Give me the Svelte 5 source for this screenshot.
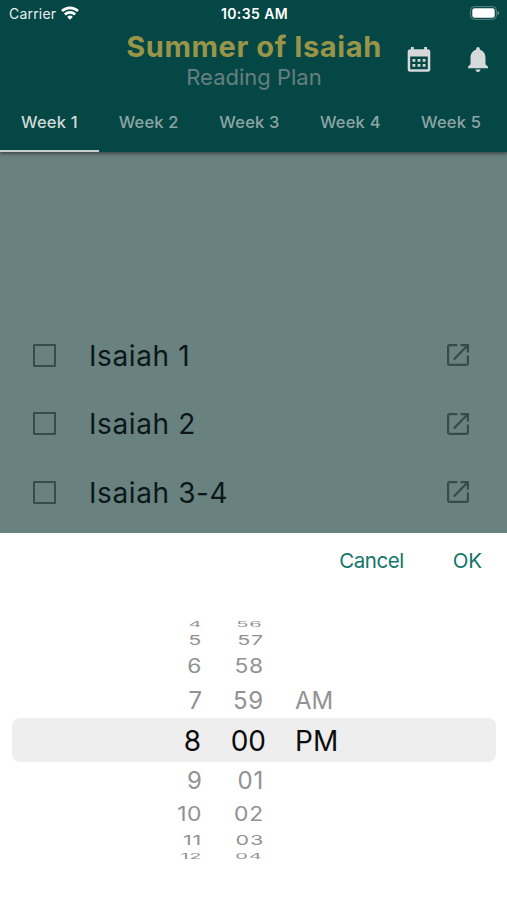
<script lang="ts">
	const weeks = [1, 2, 3, 4, 5];
	const readings = ['Isaiah 1', 'Isaiah 2', 'Isaiah 3-4'];

	let activeWeek = $state(1);

	// rows shrink towards the rim of the wheel
	const rows = [
		{ hour: '4', minute: '56', period: '', size: 'rim' },
		{ hour: '5', minute: '57', period: '', size: 'far' },
		{ hour: '6', minute: '58', period: '', size: 'mid' },
		{ hour: '7', minute: '59', period: 'AM', size: 'near' },
		{ hour: '8', minute: '00', period: 'PM', size: 'selected' },
		{ hour: '9', minute: '01', period: '', size: 'near' },
		{ hour: '10', minute: '02', period: '', size: 'mid' },
		{ hour: '11', minute: '03', period: '', size: 'far' },
		{ hour: '12', minute: '04', period: '', size: 'rim' }
	];
</script>

<div class="screen">
	<header>
		<div class="status">
			<div class="carrier">
				<span>Carrier</span>
				<svg width="18" height="14" viewBox="0 0 18 14" fill="none" stroke="#fff" stroke-width="2.7">
					<path d="M1 5.1a11.6 11.6 0 0 1 16 0M3.9 8.4a7.4 7.4 0 0 1 10.2 0" />
					<path d="M9 13.8 6.2 10.9a4.1 4.1 0 0 1 5.6 0z" fill="#fff" stroke="none" />
				</svg>
			</div>
			<span class="time">10:35 AM</span>
			<svg class="battery" width="30" height="14" viewBox="0 0 30 14">
				<rect x=".6" y=".6" width="25.8" height="12.8" rx="3.8" fill="none" stroke="#5b8481" />
				<rect x="2.3" y="2.3" width="22.4" height="9.4" rx="2.2" fill="#fff" />
				<path d="M27.7 4.8c2 .8 2 3.6 0 4.4z" fill="#769895" />
			</svg>
		</div>

		<div class="toolbar">
			<div class="titles">
				<h1>Summer of Isaiah</h1>
				<p>Reading Plan</p>
			</div>
			<div class="actions">
				<button aria-label="Calendar">
					<svg width="24" height="26" viewBox="0 0 24 26">
						<path fill="#d5d9d9" fill-rule="evenodd" d="M4 0h2.8v2.3h10.4V0H20v2.3h.8A2.5 2.5 0 0 1 23.3 4.8v17.4a2.5 2.5 0 0 1-2.5 2.5H3.2a2.5 2.5 0 0 1-2.5-2.5V4.8a2.5 2.5 0 0 1 2.5-2.5H4zM3.2 9.5v12.7h17.6V9.5zM5.5 12h2.8v2.7H5.5zm5.1 0h2.8v2.7h-2.8zm5.1 0h2.8v2.7h-2.8zM5.5 17h2.8v2.7H5.5zm5.1 0h2.8v2.7h-2.8zm5.1 0h2.8v2.7h-2.8z" />
					</svg>
				</button>
				<button aria-label="Reminders">
					<svg width="20" height="25" viewBox="4 2.5 16 19.5" preserveAspectRatio="none">
						<path fill="#d5d9d9" d="M12 22c1.1 0 2-.9 2-2h-4c0 1.1.89 2 2 2zm6-6v-5c0-3.07-1.64-5.64-4.5-6.32V4c0-.83-.67-1.5-1.5-1.5s-1.5.67-1.5 1.5v.68C7.63 5.36 6 7.92 6 11v5l-2 2v1h16v-1l-2-2z" />
					</svg>
				</button>
			</div>
		</div>

		<nav>
			{#each weeks as week}
				<button class="tab" class:active={week === activeWeek} onclick={() => (activeWeek = week)}>
					Week {week}
				</button>
			{/each}
		</nav>
	</header>

	<main>
		{#each readings as reading}
			<div class="reading">
				<span class="checkbox"></span>
				<span class="name">{reading}</span>
				<svg width="24" height="24" viewBox="0 0 24 24" fill="none" stroke="#344c4b" stroke-width="2.2">
					<path d="M11.2 2.1H3.6a1.5 1.5 0 0 0-1.5 1.5v16.8a1.5 1.5 0 0 0 1.5 1.5h16.8a1.5 1.5 0 0 0 1.5-1.5v-7.8" />
					<path d="M14.5 2.1h7.4v7.4M21.5 2.5 7.8 16.6" />
				</svg>
			</div>
		{/each}
	</main>

	<section class="sheet">
		<div class="buttons">
			<button class="cancel">Cancel</button>
			<button>OK</button>
		</div>
		<div class="wheel">
			{#each rows as row}
				<div class="row {row.size}">
					<span class="hour">{row.hour}</span>
					<span class="minute">{row.minute}</span>
					<span class="period">{row.period}</span>
				</div>
			{/each}
		</div>
	</section>
</div>

<style>
	:global(body) {
		margin: 0;
	}

	.screen {
		width: 507px;
		height: 900px;
		display: flex;
		flex-direction: column;
		overflow: hidden;
		background: #fff;
		font-family: Inter, 'Liberation Sans', sans-serif;
	}

	button {
		border: none;
		padding: 0;
		margin: 0;
		background: none;
		font-family: inherit;
	}

	svg {
		display: block;
	}

	header {
		height: 152px;
		flex: none;
		background: #054744;
		box-shadow: 0 1px 4px rgba(0, 0, 0, 0.6);
		z-index: 1;
	}

	.status {
		height: 28px;
		display: grid;
		grid-template-columns: 1fr auto 1fr;
		align-items: center;
		padding: 0 7px 0 9px;
		box-sizing: border-box;
		color: #fff;
		font-size: 14px;
	}

	.carrier {
		display: flex;
		align-items: center;
		gap: 5px;
		margin-top: -1px;
		color: #e9efee;
		letter-spacing: 0.2px;
	}

	.carrier svg {
		margin-top: -2px;
	}

	.time {
		margin-top: -1px;
		font-size: 14px;
		font-weight: 600;
		letter-spacing: 0.4px;
	}

	.battery {
		justify-self: end;
		margin-top: -2px;
	}

	.toolbar {
		height: 64px;
		display: grid;
		grid-template-columns: 1fr auto 1fr;
	}

	.titles {
		grid-column: 2;
		padding: 1px 0 0 1px;
		text-align: center;
	}

	h1 {
		margin: 0;
		color: #989549;
		font-size: 29px;
		line-height: 36px;
		font-weight: 700;
		letter-spacing: 0.6px;
	}

	.titles p {
		margin: -2px 0 0;
		color: #66807f;
		font-size: 22px;
		line-height: 28px;
	}

	.actions {
		display: flex;
		align-items: flex-start;
		justify-content: flex-end;
		gap: 37px;
		padding: 19px 19px 0 0;
	}

	nav {
		height: 60px;
		display: flex;
		gap: 2px;
	}

	.tab {
		width: 98.8px;
		flex: none;
		border-bottom: 2.5px solid transparent;
		padding-top: 1px;
		color: #8fa5a4;
		font-size: 16.5px;
		font-weight: 500;
		letter-spacing: 0.2px;
		white-space: nowrap;
	}

	.tab:not(.active) {
		padding-right: 3px;
	}

	.tab.active {
		color: #d2dad9;
		border-bottom-color: #c9d1d0;
	}

	main {
		height: 381px;
		flex: none;
		box-sizing: border-box;
		padding-top: 169px;
		background: #69817f;
	}

	.reading {
		height: 68.5px;
		display: flex;
		align-items: center;
		padding: 0 37px 0 33px;
	}

	.checkbox {
		width: 23px;
		height: 23px;
		box-sizing: border-box;
		border: 2.4px solid #344c4b;
		border-radius: 1px;
	}

	.name {
		flex: 1;
		margin-left: 33px;
		padding-top: 1px;
		color: #0b1817;
		font-size: 28px;
		letter-spacing: 0.6px;
	}

	.sheet {
		flex: 1;
		background: #fff;
	}

	.buttons {
		height: 55px;
		display: flex;
		justify-content: flex-end;
		gap: 49px;
		padding-right: 25px;
	}

	.buttons button {
		color: #127669;
		font-size: 20.5px;
		letter-spacing: -0.1px;
	}

	.buttons .cancel {
		letter-spacing: -0.45px;
	}

	.wheel {
		padding: 30px 11px 0 12px;
	}

	.row {
		display: grid;
		grid-template-columns: 190px 64px 1fr;
		align-content: center;
		color: #929292;
		line-height: 1;
	}

	.row span {
		display: block;
		transform: translateY(0.6px) scaleY(var(--squash, 1));
	}

	.hour,
	.minute {
		text-align: right;
	}

	.minute {
		padding-right: 2px;
		letter-spacing: 0.8px;
	}

	.period {
		padding-left: 29px;
	}

	.selected {
		height: 44px;
		border-radius: 8px;
		background: #eee;
		color: #0d0d0d;
		font-size: 28px;
	}

	.selected .hour {
		padding-right: 1px;
	}

	.selected .minute {
		padding-right: 0;
		letter-spacing: 0;
	}

	.near {
		height: 36px;
		font-size: 24px;
	}

	.mid {
		--squash: 0.85;
		height: 32px;
		font-size: 22.8px;
	}

	.mid .hour {
		letter-spacing: 0.6px;
	}

	.far {
		--squash: 0.64;
		height: 20px;
		font-size: 21.5px;
	}

	.far .hour {
		letter-spacing: 0.8px;
	}

	.rim {
		--squash: 0.36;
		height: 12px;
		font-size: 20px;
	}

	.rim .hour {
		letter-spacing: 0.6px;
	}

	.rim .minute {
		padding-right: 3.5px;
	}
</style>
